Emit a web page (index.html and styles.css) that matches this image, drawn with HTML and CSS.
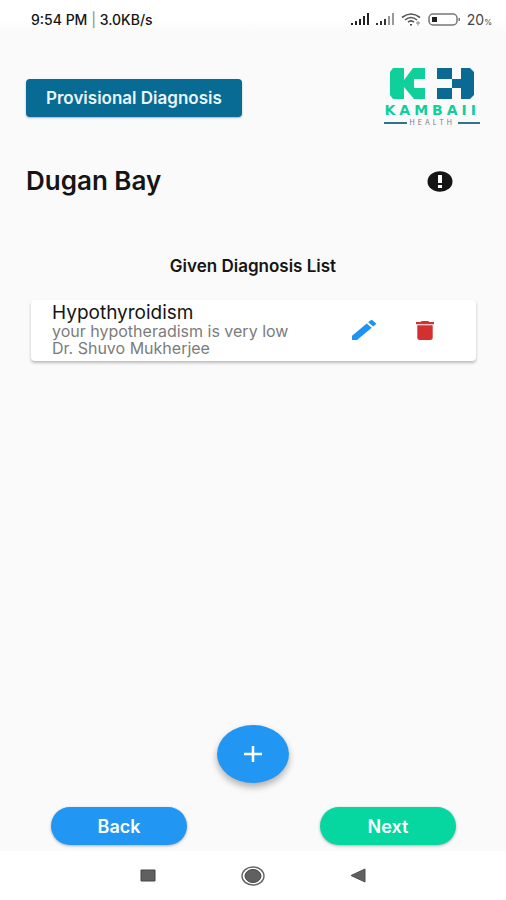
FILE: index.html
```html
<!DOCTYPE html>
<html lang="en">
<head>
<meta charset="utf-8">
<meta name="viewport" content="width=device-width, initial-scale=1">
<title>Provisional Diagnosis</title>
<link rel="stylesheet" href="styles.css">
</head>
<body>
<div class="status">
  <span class="status-time">9:54 PM <span class="status-bar">|</span> 3.0KB/s</span>
  <div class="status-icons">
    <svg width="19" height="12" viewBox="0 0 19 12" fill="#222"><path d="M0 10h2v2H0zM4 8h2v4H4zM8 6h2v6H8zM12 3h2v9h-2zM16 0h2v12h-2z"/></svg>
    <svg width="19" height="12" viewBox="0 0 19 12" fill="#333"><path d="M0 10h2v2H0zM4 8h2v4H4zM8 6h2v6H8z"/><path fill="#999" d="M12 3h2v9h-2zM16 0h2v12h-2z"/></svg>
    <svg width="21" height="13" viewBox="0 0 21 13" fill="none" stroke="#555" stroke-width="1.6"><path d="M1 4.5Q10 -2.5 19 4.5M4 7Q10 2 16 7M7 9.200Q10 6.500 13 9.200"/><path d="M9 11h2v1.500H9z" fill="#444" stroke="none"/><path d="M15 10h4M17 8v4.500" stroke-width="1" stroke="#888"/></svg>
    <svg width="33" height="13" viewBox="0 0 33 13"><rect x="1" y="1" width="28" height="11" rx="4" fill="none" stroke="#777" stroke-width="1.500"/><path d="M4 4h5v5H4z" fill="#222"/><path d="M30.500 5h1.500v3h-1.500z" fill="#777"/></svg>
    <span class="status-level">20<small>%</small></span>
  </div>
</div>
<main class="screen">
  <header class="header">
    <button class="title-button" type="button">Provisional Diagnosis</button>
    <div class="logo">
      <svg width="84" height="31" viewBox="0 0 84 31" aria-hidden="true">
        <path fill="#0fcf9b" d="M3 0H14V12L23 0H35V11H24V20H35V31H24L14 19V31H3L0 27V4Z"/>
        <path fill="#0b6a94" d="M47 0H62V11H71V0H80L84 4V27L80 31H71V20H62V31H47V20H62V11H47Z"/>
      </svg>
      <span class="logo-name">KAMBAII</span>
      <span class="logo-sub">HEALTH</span>
    </div>
  </header>
  <div class="patient">
    <h1 class="patient-name">Dugan Bay</h1>
    <button type="button" aria-label="Patient alerts">
      <svg width="26" height="21" viewBox="0 0 26 21"><ellipse cx="13" cy="10.500" rx="12.500" ry="10.200" fill="#151515"/><path d="M11 4h4v8h-4zM11 14h4v3h-4z" fill="#fafafa"/></svg>
    </button>
  </div>
  <h2 class="list-title">Given Diagnosis List</h2>
  <article class="card">
    <div class="card-text">
      <h3 class="card-title">Hypothyroidism</h3>
      <p class="card-line">your hypotheradism is very low</p>
      <p class="card-line">Dr. Shuvo Mukherjee</p>
    </div>
    <div class="card-actions">
      <button type="button" aria-label="Edit"><svg width="24" height="20" viewBox="3 3 18 18" preserveAspectRatio="none" fill="#1e93f3"><path d="M3 17.250V21h3.750L17.810 9.940l-3.750-3.750L3 17.250zM20.710 7.040a1 1 0 0 0 0-1.410l-2.340-2.340a1 1 0 0 0-1.410 0l-1.830 1.830 3.750 3.750 1.830-1.830z"/></svg></button>
      <button type="button" aria-label="Delete"><svg width="18" height="19" viewBox="5 3 14 18" preserveAspectRatio="none" fill="#d3302f"><path d="M6 19a2 2 0 0 0 2 2h8a2 2 0 0 0 2-2V7H6v12zM19 4h-3.500l-1-1h-5l-1 1H5v2h14V4z"/></svg></button>
    </div>
  </article>
  <button class="fab" type="button" aria-label="Add diagnosis"><svg width="18" height="16" viewBox="0 0 18 16" fill="#fff"><path d="M7.750 0h2.500v6.750H18v2.500h-7.750V16h-2.500V9.250H0v-2.500h7.750z"/></svg></button>
  <div class="actions">
    <button class="pill back" type="button">Back</button>
    <button class="pill next" type="button">Next</button>
  </div>
</main>
<nav class="system-nav">
  <button type="button" aria-label="Recent apps"><svg width="16" height="13" viewBox="0 0 16 13"><path d="M1 1h14v11H1z" fill="#606060" stroke="#444"/></svg></button>
  <button type="button" aria-label="Home"><svg width="24" height="20" viewBox="0 0 24 20"><ellipse cx="12" cy="10" rx="11" ry="9" fill="none" stroke="#666" stroke-width="1.400"/><ellipse cx="12" cy="10" rx="8" ry="6.500" fill="#606060" stroke="#444"/></svg></button>
  <button type="button" aria-label="Go back"><svg width="16" height="15" viewBox="0 0 16 15"><path d="M1 7.500L15 1V14Z" fill="#606060" stroke="#505050"/></svg></button>
</nav>
</body>
</html>
```
FILE: styles.css
```css
* {
  box-sizing: border-box;
}

body {
  margin: 0;
  min-height: 100vh;
  display: flex;
  flex-direction: column;
  background: #fafafa;
  color: #151515;
  font-family: Inter, Roboto, sans-serif;
}

h1, h2, h3, p {
  margin: 0;
}

button {
  padding: 0;
  border: 0;
  background: none;
  font: inherit;
  cursor: pointer;
}

svg {
  display: block;
}

.status {
  display: flex;
  justify-content: space-between;
  align-items: center;
  height: 32px;
  padding: 6px 14px 0 31px;
  background: linear-gradient(#fff 60%, #fafafa);
  font-size: 14px;
  font-weight: 500;
}

.status-bar {
  color: #999;
}

.status-icons {
  display: flex;
  align-items: center;
  gap: 6px;
}

.status-level {
  color: #444;
  font-weight: 400;
}

.status-level small {
  font-size: 8px;
}

.screen {
  flex: 1;
  display: flex;
  flex-direction: column;
  padding: 36px 26px 6px;
}

.header {
  display: flex;
  justify-content: space-between;
  align-items: center;
}

.title-button {
  height: 38px;
  padding: 0 20px;
  border-radius: 4px;
  background: #076b93;
  box-shadow: 0 1px 2px rgba(0, 0, 0, 0.3);
  color: #e9f5fa;
  font-size: 17px;
  font-weight: 600;
}

.logo {
  display: flex;
  flex-direction: column;
  align-items: center;
}

.logo-name {
  margin-top: 3px;
  color: #0fcf9b;
  font-family: "DejaVu Sans", sans-serif;
  font-size: 14px;
  font-weight: 700;
  line-height: 16px;
  letter-spacing: 4px;
}

.logo-sub {
  display: flex;
  align-items: center;
  align-self: stretch;
  gap: 3px;
  color: #777;
  font-size: 7px;
  line-height: 9px;
  letter-spacing: 3px;
}

.logo-sub::before,
.logo-sub::after {
  content: "";
  flex: 1;
  height: 2px;
  background: #2f7585;
}

.patient {
  display: flex;
  justify-content: space-between;
  align-items: center;
  margin-top: 38px;
  padding-right: 27px;
}

.patient-name {
  font-size: 26px;
  font-weight: 600;
  line-height: 32px;
}

.list-title {
  margin-top: 59px;
  font-size: 17px;
  font-weight: 600;
  line-height: 20px;
  text-align: center;
}

.card {
  display: flex;
  justify-content: space-between;
  align-items: center;
  margin: 24px 4px 0 5px;
  padding: 3px 42px 4px 21px;
  border-radius: 4px;
  background: #fff;
  box-shadow: 0 2px 3px rgba(0, 0, 0, 0.25);
}

.card-title {
  font-size: 19px;
  font-weight: 400;
  line-height: 20px;
}

.card-line {
  color: #7c7c7c;
  font-size: 16px;
  line-height: 17px;
}

.card-actions {
  display: flex;
  align-items: center;
  gap: 40px;
}

.fab {
  display: flex;
  align-items: center;
  justify-content: center;
  align-self: center;
  width: 72px;
  height: 58px;
  margin-top: auto;
  border-radius: 50%;
  background: #2196f3;
  box-shadow: 0 4px 7px rgba(0, 0, 0, 0.3);
}

.actions {
  display: flex;
  justify-content: space-between;
  margin-top: 24px;
  padding: 0 24px 0 25px;
}

.pill {
  width: 136px;
  height: 38px;
  border-radius: 19px;
  box-shadow: 0 1px 3px rgba(0, 0, 0, 0.3);
  color: #fff;
  font-size: 18px;
  font-weight: 600;
}

.back {
  background: #2196f3;
}

.next {
  background: #06d6a0;
}

.system-nav {
  display: flex;
  justify-content: center;
  align-items: center;
  gap: 85px;
  height: 49px;
  background: #fff;
}
```
